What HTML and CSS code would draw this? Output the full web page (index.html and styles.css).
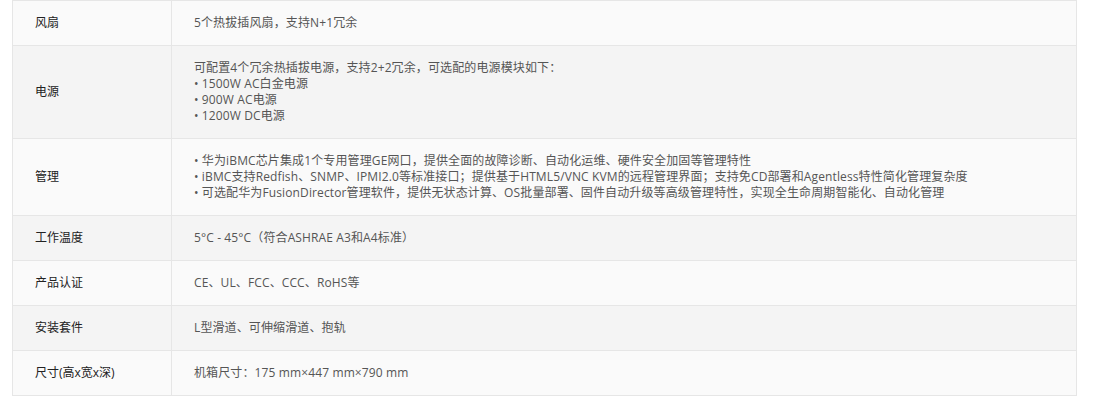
FILE: index.html
```html
<!DOCTYPE html>
<html lang="zh-CN">
<head>
  <meta charset="UTF-8" />
  <meta name="viewport" content="width=device-width, initial-scale=1.0" />
  <title>规格参数</title>
  <link rel="stylesheet" href="styles.css">
</head>
<body>
  <div class="specs">
    <table class="spec-table">
      <tbody>
        <tr>
          <th>风扇</th>
          <td>5个热拔插风扇，支持N+1冗余</td>
        </tr>
        <tr>
          <th>电源</th>
          <td>
            可配置4个冗余热插拔电源，支持2+2冗余，可选配的电源模块如下：<br>
            • 1500W AC白金电源<br>
            • 900W AC电源<br>
            • 1200W DC电源
          </td>
        </tr>
        <tr>
          <th>管理</th>
          <td>
            • 华为iBMC芯片集成1个专用管理GE网口，提供全面的故障诊断、自动化运维、硬件安全加固等管理特性<br>
            • iBMC支持Redfish、SNMP、IPMI2.0等标准接口；提供基于HTML5/VNC KVM的远程管理界面；支持免CD部署和Agentless特性简化管理复杂度<br>
            • 可选配华为FusionDirector管理软件，提供无状态计算、OS批量部署、固件自动升级等高级管理特性，实现全生命周期智能化、自动化管理
          </td>
        </tr>
        <tr>
          <th>工作温度</th>
          <td>5°C - 45°C（符合ASHRAE A3和A4标准）</td>
        </tr>
        <tr>
          <th>产品认证</th>
          <td>CE、UL、FCC、CCC、RoHS等</td>
        </tr>
        <tr>
          <th>安装套件</th>
          <td>L型滑道、可伸缩滑道、抱轨</td>
        </tr>
        <tr>
          <th>尺寸(高x宽x深)</th>
          <td>机箱尺寸：175 mm×447 mm×790 mm</td>
        </tr>
      </tbody>
    </table>
  </div>
</body>
</html>
```

FILE: styles.css
```css
/* 规格表 */
body {
  margin: 0;
  background: #fff;
  font-family: "Open Sans", "Noto Sans CJK SC", sans-serif;
  font-size: 12px;
  color: #333;
}
.specs {
  padding: 0 16px 0 12px;
}
.spec-table {
  width: 100%;
  border-collapse: collapse;
  table-layout: fixed;
}
.spec-table th,
.spec-table td {
  border: 1px solid #e6e6e6;
  padding: 14px 22px;
  line-height: 16px;
  text-align: left;
  vertical-align: middle;
}
.spec-table th {
  width: 114px;
  font-weight: normal;
  color: #222;
}
.spec-table td {
  color: #555;
  letter-spacing: 0.12px;
}
.spec-table tr:nth-child(odd) {
  background: #fafafa;
}
.spec-table tr:nth-child(even) {
  background: #f4f4f4;
}
```
